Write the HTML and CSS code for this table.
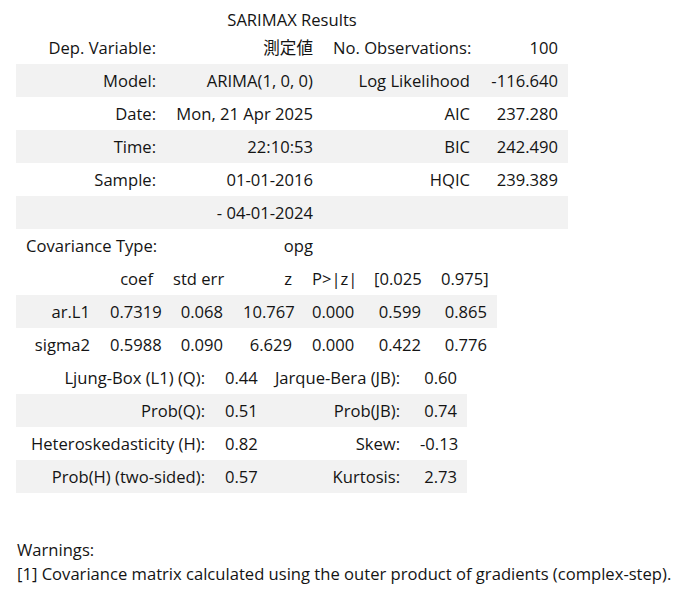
FILE: index.html
```html
<!DOCTYPE html>
<html lang="en">
<head>
<meta charset="utf-8">
<title>SARIMAX Results</title>
<link rel="stylesheet" href="styles.css">
</head>
<body>
<div class="output">
  <table class="simpletable t-top">
    <caption>SARIMAX Results</caption>
    <colgroup><col class="c150"><col class="c157"><col class="c157"><col class="c88"></colgroup>
    <tr><th>Dep. Variable:</th><td>測定値</td><th>No. Observations:</th><td>100</td></tr>
    <tr><th>Model:</th><td>ARIMA(1, 0, 0)</td><th>Log Likelihood</th><td>-116.640</td></tr>
    <tr><th>Date:</th><td>Mon, 21 Apr 2025</td><th>AIC</th><td>237.280</td></tr>
    <tr><th>Time:</th><td>22:10:53</td><th>BIC</th><td>242.490</td></tr>
    <tr><th>Sample:</th><td>01-01-2016</td><th>HQIC</th><td>239.389</td></tr>
    <tr><th></th><td>- 04-01-2024</td><th></th><td></td></tr>
    <tr><th>Covariance Type:</th><td>opg</td><th></th><td></td></tr>
  </table>
  <table class="simpletable t-coef">
    <colgroup><col class="c84"><col class="c63"><col class="c70"><col class="c69"><col class="c62"><col class="c67"><col class="c66"></colgroup>
    <tr><td></td><th>coef</th><th>std err</th><th>z</th><th>P&gt;|z|</th><th>[0.025</th><th>0.975]</th></tr>
    <tr><th>ar.L1</th><td>0.7319</td><td>0.068</td><td>10.767</td><td>0.000</td><td>0.599</td><td>0.865</td></tr>
    <tr><th>sigma2</th><td>0.5988</td><td>0.090</td><td>6.629</td><td>0.000</td><td>0.422</td><td>0.776</td></tr>
  </table>
  <table class="simpletable t-diag">
    <colgroup><col class="c199"><col class="c45"><col class="c150"><col class="c57"></colgroup>
    <tr><th>Ljung-Box (L1) (Q):</th><td>0.44</td><th>Jarque-Bera (JB):</th><td>0.60</td></tr>
    <tr><th>Prob(Q):</th><td>0.51</td><th>Prob(JB):</th><td>0.74</td></tr>
    <tr><th>Heteroskedasticity (H):</th><td>0.82</td><th>Skew:</th><td>-0.13</td></tr>
    <tr><th>Prob(H) (two-sided):</th><td>0.57</td><th>Kurtosis:</th><td>2.73</td></tr>
  </table>
  <div class="warnings">
    <div>Warnings:</div>
    <div>[1] Covariance matrix calculated using the outer product of gradients (complex-step).</div>
  </div>
</div>
</body>
</html>
```

FILE: styles.css
```css
html, body {
  margin: 0;
  padding: 0;
  background: #ffffff;
}

body {
  font-family: "Open Sans", "Noto Sans CJK JP", sans-serif;
  font-size: 16.6px;
  color: #141414;
}

.output {
  padding: 8px 0 0 16px;
}

.simpletable {
  border-collapse: collapse;
  border-spacing: 0;
  table-layout: fixed;
}

.simpletable caption {
  height: 23px;
  line-height: 23px;
  text-align: center;
}

.simpletable th,
.simpletable td {
  height: 33px;
  padding: 0 10px;
  font-weight: normal;
  text-align: right;
  white-space: nowrap;
  vertical-align: middle;
  line-height: 20px;
  box-sizing: border-box;
}

.simpletable tr:nth-child(even) {
  background: #f2f2f2;
}

.t-top { width: 552px; }
.t-coef { width: 481px; }
.t-diag { width: 451px; }

.c150 { width: 150px; }
.c157 { width: 157px; }
.c88 { width: 88px; }
.c84 { width: 84px; }
.c63 { width: 63px; }
.c70 { width: 70px; }
.c69 { width: 69px; }
.c62 { width: 62px; }
.c67 { width: 67px; }
.c66 { width: 66px; }
.c199 { width: 199px; }
.c45 { width: 45px; }
.c57 { width: 57px; }

.warnings {
  margin-top: 45px;
  margin-left: 1px;
  line-height: 24px;
}
```
